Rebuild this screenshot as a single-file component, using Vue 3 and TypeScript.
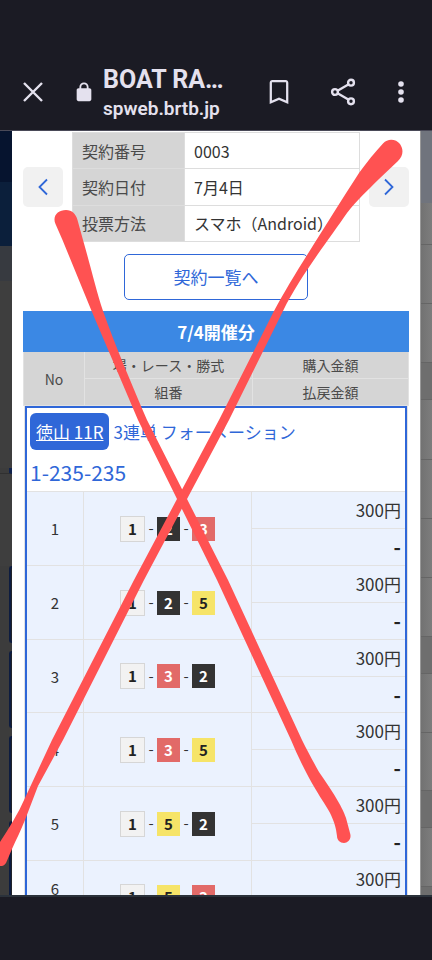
<script setup lang="ts">
interface Bet {
  no: number
  boats: number[]
  amount: string
  payout: string
}

const info: { label: string; value: string }[] = [
  { label: '契約番号', value: '0003' },
  { label: '契約日付', value: '7月4日' },
  { label: '投票方法', value: 'スマホ（Android）' },
]

const bets: Bet[] = [
  [1, 2, 3],
  [1, 2, 5],
  [1, 3, 2],
  [1, 3, 5],
  [1, 5, 2],
  [1, 5, 3],
].map((boats, i) => ({ no: i + 1, boats, amount: '300円', payout: '-' }))

// Heights of the dimmed page sections that show on each side of the sheet.
const leftBands: { kind: string; height: number }[] = [
  { kind: 'navy', height: 51 },
  { kind: 'navy-light', height: 64 },
  { kind: 'slate', height: 35 },
  { kind: 'plain', height: 187 },
  { kind: 'tab', height: 6 },
  { kind: 'plain', height: 92 },
  { kind: 'card', height: 77 },
  { kind: 'gap', height: 8 },
  { kind: 'card', height: 77 },
  { kind: 'gap', height: 8 },
  { kind: 'card', height: 77 },
  { kind: 'gap', height: 8 },
  { kind: 'card', height: 77 },
]

const rightBands: { kind: string; height: number }[] = [
  { kind: 'haze', height: 72 },
  { kind: 'row', height: 42 },
  { kind: 'row', height: 59 },
  { kind: 'row', height: 59 },
  { kind: 'head', height: 37 },
  { kind: 'row', height: 60 },
  { kind: 'row', height: 59 },
  { kind: 'row', height: 59 },
  { kind: 'row', height: 59 },
  { kind: 'head', height: 37 },
  { kind: 'row', height: 59 },
  { kind: 'row', height: 58 },
  { kind: 'head', height: 37 },
  { kind: 'row', height: 59 },
  { kind: 'head', height: 37 },
]
</script>

<template>
  <div class="screen">
    <header class="toolbar">
      <button class="tool" type="button" aria-label="閉じる">
        <svg width="24" height="24" viewBox="0 0 24 24" fill="none" stroke="currentColor" stroke-width="2.4">
          <path d="M3 3L21 21M21 3L3 21" />
        </svg>
      </button>
      <svg class="lock" width="22" height="22" viewBox="0 0 24 24" aria-hidden="true">
        <path
          fill="currentColor"
          fill-rule="evenodd"
          d="M18 8h-1V6.500C17 3.500 14.800 1.500 12 1.500S7 3.500 7 6.500V8H6c-1.100 0-2 .9-2 2v10c0 1.100.9 2 2 2h12c1.100 0 2-.9 2-2V10c0-1.100-.9-2-2-2zM9 8V6.500c0-1.800 1.300-3 3-3s3 1.200 3 3V8z"
        />
      </svg>
      <div class="site">
        <h1>BOAT RA…</h1>
        <p>spweb.brtb.jp</p>
      </div>
      <button class="tool" type="button" aria-label="ブックマーク">
        <svg width="32" height="32" viewBox="0 0 24 24" fill="currentColor">
          <path d="M17 3H7c-1.100 0-2 .9-2 2v16l7-3 7 3V5c0-1.100-.9-2-2-2zm.3 15.400L12 16.200l-5.300 2.200V4.700h10.600z" />
        </svg>
      </button>
      <button class="tool share" type="button" aria-label="共有">
        <svg width="28" height="30" viewBox="0 0 28 30" fill="none" stroke="currentColor" stroke-width="2.400">
          <path d="M9 13.500L19.300 7.500M9 16.500L19.300 22.500" />
          <circle cx="6" cy="15" r="2.900" />
          <circle cx="22" cy="5.700" r="2.900" />
          <circle cx="22" cy="24.300" r="2.900" />
        </svg>
      </button>
      <button class="tool more" type="button" aria-label="メニュー">
        <svg width="8" height="24" viewBox="0 0 8 24" fill="currentColor">
          <circle cx="4" cy="4" r="2.800" />
          <circle cx="4" cy="12" r="2.800" />
          <circle cx="4" cy="20" r="2.800" />
        </svg>
      </button>
    </header>

    <div class="viewport">
      <div class="backdrop backdrop-left" aria-hidden="true">
        <div v-for="(b, i) in leftBands" :key="i" :class="['band', b.kind]" :style="{ height: b.height + 'px' }"></div>
      </div>

      <main class="sheet">
        <div class="summary">
          <button class="nav" type="button" aria-label="前へ">
            <svg width="20" height="20" viewBox="0 0 20 20" fill="none" stroke="currentColor" stroke-width="1.800">
              <path d="M14 2.500L6.500 10L14 17.500" />
            </svg>
          </button>
          <table class="info">
            <tbody>
              <tr v-for="row in info" :key="row.label">
                <th scope="row">{{ row.label }}</th>
                <td>{{ row.value }}</td>
              </tr>
            </tbody>
          </table>
          <button class="nav" type="button" aria-label="次へ">
            <svg width="20" height="20" viewBox="0 0 20 20" fill="none" stroke="currentColor" stroke-width="1.800">
              <path d="M6 2.500L13.500 10L6 17.500" />
            </svg>
          </button>
        </div>

        <button class="list-button" type="button">契約一覧へ</button>

        <h2 class="banner">7/4開催分</h2>

        <table class="head">
          <colgroup>
            <col class="head-no" />
            <col />
            <col class="head-money" />
          </colgroup>
          <thead>
            <tr>
              <th rowspan="2">No</th>
              <th>場・レース・勝式</th>
              <th>購入金額</th>
            </tr>
            <tr>
              <th>組番</th>
              <th>払戻金額</th>
            </tr>
          </thead>
        </table>

        <section class="group">
          <div class="race">
            <div class="race-line">
              <a class="race-link" href="#race">徳山 11R</a>
              <span>3連単 フォーメーション</span>
            </div>
            <div class="formation">1-235-235</div>
          </div>
          <table class="bets">
            <colgroup>
              <col class="bet-no" />
              <col />
              <col class="bet-money" />
            </colgroup>
            <tbody v-for="bet in bets" :key="bet.no">
              <tr>
                <td rowspan="2" class="no">{{ bet.no }}</td>
                <td rowspan="2">
                  <div class="combo">
                    <template v-for="(boat, i) in bet.boats" :key="i">
                      <span v-if="i > 0" class="dash">-</span>
                      <span :class="['boat', 'boat-' + boat]">{{ boat }}</span>
                    </template>
                  </div>
                </td>
                <td class="money">{{ bet.amount }}</td>
              </tr>
              <tr>
                <td class="money payout">{{ bet.payout }}</td>
              </tr>
            </tbody>
          </table>
        </section>
      </main>

      <div class="backdrop backdrop-right" aria-hidden="true">
        <div v-for="(b, i) in rightBands" :key="i" :class="['band', b.kind]" :style="{ height: b.height + 'px' }"></div>
      </div>
    </div>

    <footer class="system-bar"></footer>

    <svg class="marker" viewBox="0 0 432 960" preserveAspectRatio="none" aria-hidden="true">
      <path
        d="M55.500 224C52 216 58 210 66 210C72 210 76 214 77.500 220L83 240C90 264 96 290 103 311C115 345 132 385 147 420L187 499L228 580L302 740C308 752 314 763 319 772C325 781 333 792 339 803C343 810 345 815 346 818L350 833C352 839 348 843 344 843C340 843 337 840 337 836C336 828 335 824 331 815C328 808 321 799 316 790C307 775 298 757 291 740L217 580L177 499L138 420L92 312L62.500 240Z"
      />
      <path
        d="M383 143.500C388 138 396 139 400 144C404 150 403 156 398 161L379 179C368 190 357 200 347 213C330 238 300 276 283 311L229 420L187 499L144 580L63 740L38 786L25 820C21 830 16 840 12 849L6 863C4 866 2 866 0 866V842C9 828 18 814 25 798L52 740L134 580L177 499L219 420L274 311C285 291 295 274 309 252C326 225 344 196 359 173C367 162 375 152 383 143.500Z"
      />
    </svg>
  </div>
</template>

<style>
body {
  margin: 0;
}
</style>

<style scoped>
.screen {
  position: relative;
  display: flex;
  flex-direction: column;
  height: 100vh;
  overflow: hidden;
  background: #1b1b24;
  color: #333;
  font-family: 'Noto Sans CJK JP', 'Noto Sans', sans-serif;
}

button {
  font: inherit;
  cursor: pointer;
}

.toolbar {
  display: flex;
  flex: none;
  align-items: center;
  height: 76px;
  padding: 54px 9px 0 11px;
  border-bottom: 1px solid #4a4a58;
  color: #e4e1ee;
  font-family: Roboto, sans-serif;
}

.tool {
  display: flex;
  flex: none;
  align-items: center;
  justify-content: center;
  width: 44px;
  height: 44px;
  padding: 0;
  border: 0;
  background: none;
  color: inherit;
}

.lock {
  flex: none;
  margin: 0 8px 0 18px;
}

.site {
  flex: 1;
  min-width: 0;
  padding-bottom: 1px;
  white-space: nowrap;
}

.site h1 {
  margin: 0;
  padding-top: 4px;
  font-size: 25px;
  font-weight: 700;
  line-height: 30px;
}

.site p {
  margin: 0;
  font-size: 19px;
  font-weight: 600;
  line-height: 28px;
}

.share {
  margin: 0 14px 0 20px;
}

.viewport {
  display: flex;
  flex: 1;
  min-height: 0;
  overflow: hidden;
}

.backdrop {
  flex: none;
  width: 12px;
  overflow: hidden;
}

.band {
  box-sizing: border-box;
}

.backdrop-left {
  background: #3c3c3c;
}

.navy {
  background: #06142f;
}

.navy-light {
  background: #0b1f3b;
}

.slate {
  background: #373a40;
}

.plain {
  background: #3e3e3e;
}

.tab {
  border-right: 3px solid #10224d;
  border-bottom: 1px solid #303030;
}

.card {
  margin-left: 9px;
  border: 2px solid #0d1c40;
  border-right: 0;
  border-radius: 5px 0 0 5px;
  background: #22242a;
}

.backdrop-right {
  background: #787878;
  border-left: 1px solid #999;
  width: 11px;
}

.haze {
  background: #70747d;
}

.row {
  border-bottom: 1px solid #656565;
  background: linear-gradient(90deg, #727272, #7d7d7d);
}

.head.band {
  border-bottom: 1px solid #656565;
  background: #6e6e6e;
}

.sheet {
  flex: 1;
  min-width: 0;
  padding: 1px 11px 0;
  background: #fff;
}

.summary {
  display: flex;
  align-items: center;
  gap: 9px;
}

.nav {
  display: flex;
  flex: none;
  align-items: center;
  justify-content: center;
  width: 40px;
  height: 40px;
  padding: 0;
  border: 0;
  border-radius: 5px;
  background: #f1f1f1;
  color: #2f67d8;
}

table {
  border-spacing: 0;
  table-layout: fixed;
  width: 100%;
}

.info {
  flex: 1;
  min-width: 0;
  height: 110px;
  border-collapse: collapse;
  font-size: 16px;
  line-height: 24px;
}

.info th,
.info td {
  padding: 0 9px;
  border: 1px solid #ddd;
  font-weight: 400;
  text-align: left;
  white-space: nowrap;
}

.info th {
  width: 93px;
  background: #d5d5d5;
  color: #4a4a4a;
}

.list-button {
  display: block;
  width: 184px;
  height: 46px;
  margin: 12px auto 11px;
  padding: 0;
  border: 1px solid #2f67d8;
  border-radius: 5px;
  background: #fff;
  color: #2f67d8;
  font-size: 17px;
  line-height: 42px;
}

.banner {
  margin: 0;
  background: #3b88e4;
  color: #fff;
  font-size: 17px;
  font-weight: 700;
  line-height: 41px;
  text-align: center;
}

table.head {
  border-left: 1px solid #e2e2e2;
  background: #d5d5d5;
}

.head-no {
  width: 61px;
}

.head-money {
  width: 156px;
}

.head th {
  box-sizing: border-box;
  height: 27px;
  padding: 0;
  border-right: 1px solid #e2e2e2;
  border-bottom: 1px solid #e2e2e2;
  color: #4a4a4a;
  font-size: 14px;
  font-weight: 400;
  line-height: 20px;
}

.group {
  margin: 0 2px;
  border: 2px solid #2f67d8;
  border-bottom: 0;
  box-shadow: 0 0 0 1px #e2e2e2;
}

.race {
  padding: 5px 3px 0;
  border-bottom: 1px solid #e2e2e2;
  color: #2f67d8;
}

.race-line {
  display: flex;
  align-items: center;
  gap: 4px;
  font-size: 17px;
  line-height: 37px;
  white-space: nowrap;
}

.race-link {
  padding: 0 6px;
  border-radius: 6px;
  background: #2f67d8;
  color: #fff;
}

.formation {
  padding-top: 3px;
  font-size: 21px;
  line-height: 38px;
}

.bets {
  background: #ebf2fe;
}

.bet-no {
  width: 57px;
}

.bet-money {
  width: 153px;
}

.bets td {
  box-sizing: border-box;
  height: 37px;
  padding: 0;
  border-right: 1px solid #e2e2e2;
  border-bottom: 1px solid #e2e2e2;
  text-align: center;
}

.no {
  font-size: 15px;
}

.bets tbody:last-child .no {
  padding-bottom: 18px;
}

.bets .money {
  padding-right: 4px;
  border-right: 0;
  font-size: 17px;
  line-height: 24px;
  text-align: right;
}

.bets .payout {
  color: #222;
  font-size: 20px;
  font-weight: 700;
}

.bets tbody:nth-of-type(3n) .payout {
  height: 36px;
}

.combo {
  display: flex;
  align-items: center;
  justify-content: center;
}

.dash {
  width: 12px;
  padding-bottom: 2px;
  font-size: 15px;
}

.boat {
  width: 23px;
  font-size: 15px;
  font-weight: 700;
  line-height: 24px;
}

.boat-1 {
  border: 1px solid #d6d6d6;
  background: #f2f2f2;
  color: #222;
}

.boat-2 {
  background: #333;
  color: #fff;
}

.boat-3 {
  background: #e26a68;
  color: #fff;
}

.boat-5 {
  background: #f6e468;
  color: #222;
}

.system-bar {
  box-sizing: border-box;
  flex: none;
  height: 65px;
  border-top: 2px solid #2b323b;
}

.marker {
  position: absolute;
  inset: 0;
  width: 100%;
  height: 100%;
  fill: #ff5252;
  pointer-events: none;
}
</style>
